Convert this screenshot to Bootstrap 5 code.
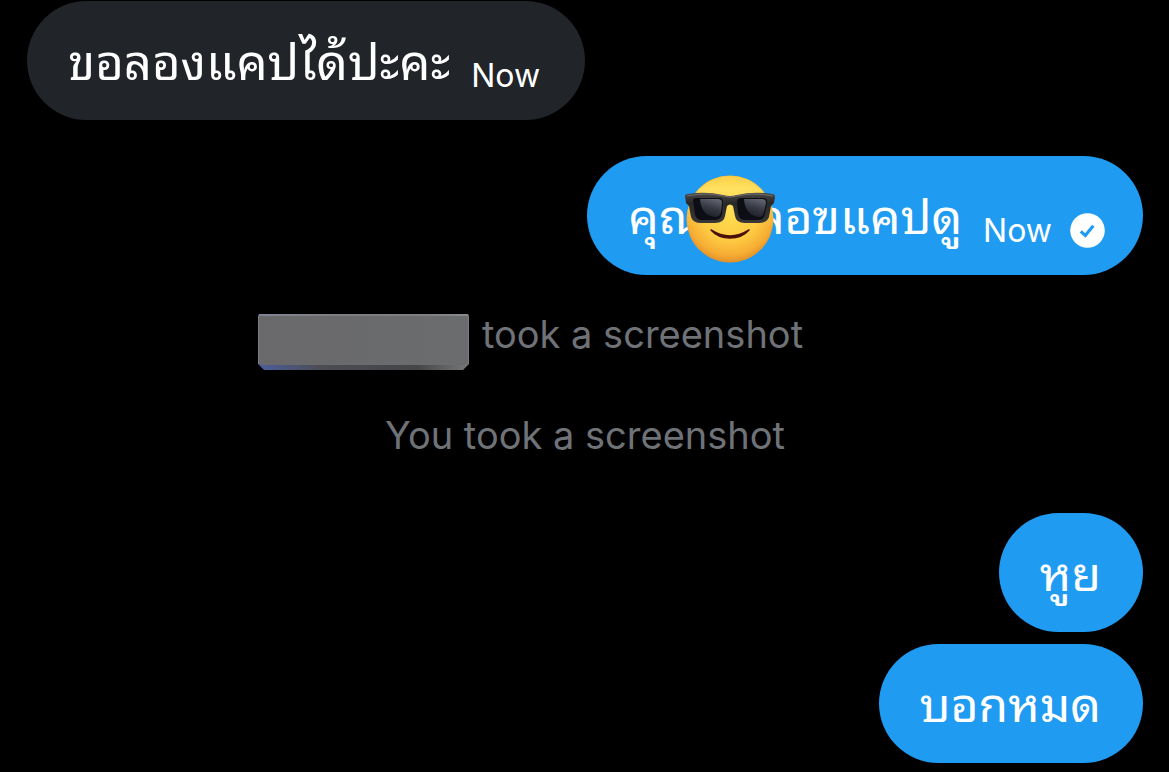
<!DOCTYPE html>
<html lang="th">
<head>
<meta charset="utf-8">
<meta name="viewport" content="width=device-width, initial-scale=1">
<title>Messages</title>
<link href="https://cdn.jsdelivr.net/npm/bootstrap@5.3.0/dist/css/bootstrap.min.css" rel="stylesheet">
<style>
body { background: #000; font-family: "Noto Sans Thai Looped", "Noto Sans", sans-serif; }
.thread { padding: 1px 26px 9px 27px; }
.bubble { min-height: 119px; padding: 0 42px 0 41px; border-radius: 60px; font-size: 48px; line-height: 76px; color: #fff; }
.bubble-in { background: #212428; font-size: 49px; padding-right: 45px; }
.bubble-out { background: #1f9bf2; }
.bubble-sent { padding-right: 38px; }
.bubble-text { padding-bottom: 6px; }
.stamp { font-family: Inter, sans-serif; font-size: 32px; line-height: 40px; margin: 30px 0 0 21px; }
.sent-icon { margin: 30px 0 0 18px; }
.gap-reply { margin-top: 36px; }
.gap-group { margin-top: 12px; }
.sticker { margin: 6px -19px 0 -17px; position: relative; }
.notice { font-family: Inter, sans-serif; font-size: 38px; line-height: 50px; color: #6f7378; }
.notice-first { margin-top: 34px; padding-right: 110px; }
.notice-second { margin-top: 38px; margin-bottom: 53px; }
.name-block { margin: 5px 12px 1px 0; }
</style>
</head>
<body>
<main class="thread container-fluid d-flex flex-column">
  <div class="bubble bubble-in d-flex align-items-center align-self-start">
    <span class="bubble-text">ขอลองแคปได้ปะคะ</span>
    <span class="stamp">Now</span>
  </div>

  <div class="bubble bubble-out bubble-sent gap-reply d-flex align-items-center align-self-end">
    <span class="bubble-text">คุณ</span>
    <svg class="sticker flex-shrink-0" width="92" height="90" viewBox="0 0 92 90" role="img" aria-label="Smiling face with sunglasses">
      <defs>
        <radialGradient id="face" cx=".5" cy=".42" r=".6">
          <stop offset="0" stop-color="#ffdc50"/><stop offset=".55" stop-color="#fdca42"/><stop offset=".82" stop-color="#f6ae34"/><stop offset="1" stop-color="#e08a26"/>
        </radialGradient>
        <linearGradient id="shine" x2="0" y2="1"><stop stop-color="#ffd84e" stop-opacity=".7"/><stop offset=".15" stop-color="#ffe668" stop-opacity=".8"/><stop offset=".6" stop-color="#ffe052" stop-opacity="0"/></linearGradient>
        <linearGradient id="lens" x1=".7" y1="0" x2=".35" y2="1"><stop stop-color="#62646f"/><stop offset=".5" stop-color="#363844"/><stop offset="1" stop-color="#1c1d27"/></linearGradient>
        <linearGradient id="frame" x2="0" y2="1"><stop stop-color="#4b4948"/><stop offset=".35" stop-color="#292828"/><stop offset="1" stop-color="#393737"/></linearGradient>
      </defs>
      <circle cx="46" cy="45" r="43.500" fill="url(#face)"/>
      <circle cx="46" cy="45" r="43" fill="url(#shine)"/>
      <path d="M1 22Q1 20 4 20Q22 17 39 21Q46 23 53 21Q70 17 88 20Q91 20 91 23L90 29L87 32L85 43Q83 49 75 49L61 49Q52 49 51 42L49 32Q46 29 43 32L41 42Q40 49 31 49L17 49Q9 49 7 43L5 32L2 29Z" fill="url(#frame)"/>
      <path d="M9 26Q9 24 13 24L35 24Q39 24 39 28L38 40Q37 46 30 46L18 46Q12 46 11 40Z" fill="#0d0e15"/>
      <path d="M53 28Q53 24 57 24L79 24Q83 24 83 28L81 40Q80 46 74 46L62 46Q55 46 54 40Z" fill="#0d0e15"/>
      <path d="M16 25L34 25Q38 25 38 29L37 38Q36 43 31 43Q17 41 16 25Z" fill="url(#lens)"/>
      <path d="M60 25L78 25Q82 25 82 29L80 38Q79 43 75 43Q61 41 60 25Z" fill="url(#lens)"/>
      <path d="M3 22Q22 18 39 22Q46 24 53 22Q70 18 89 22" fill="none" stroke="#716e6c" stroke-width="1"/>
      <path d="M27 56Q46 68 65 56Q58 64 46 64Q34 64 27 56Z" fill="#4b1008" stroke="#4b1008" stroke-width="1.500" stroke-linejoin="round"/>
    </svg>
    <span class="bubble-text">ลอฃแคปดู</span>
    <span class="stamp">Now</span>
    <svg class="sent-icon flex-shrink-0" width="35" height="35" viewBox="0 0 35 35" role="img" aria-label="Sent">
      <circle cx="17.500" cy="17.500" r="17.300" fill="#fff"/>
      <path d="M10.800 18.400L15.300 22.500L23.300 12.800" fill="none" stroke="#1f9bf2" stroke-width="3.200"/>
    </svg>
  </div>

  <div class="notice notice-first d-flex justify-content-center">
    <svg class="name-block flex-shrink-0" width="213" height="57" viewBox="0 0 213 57" role="img" aria-label="Hidden name">
      <defs>
        <linearGradient id="plate"><stop stop-color="#69696c"/><stop offset="1" stop-color="#6b6c6e"/></linearGradient>
        <linearGradient id="edge"><stop stop-color="#4c5f9c"/><stop offset=".3" stop-color="#4b4c54"/><stop offset=".75" stop-color="#454548"/><stop offset="1" stop-color="#77787a"/></linearGradient>
      </defs>
      <path d="M1 2Q1 0 3 0H210Q212 0 212 2V50L206 56H7L1 50Z" fill="url(#edge)"/>
      <path d="M1 2H212V49L208 51H5L1 49Z" fill="url(#plate)"/>
      <path d="M2 1H211" stroke="#919195" stroke-width="1.500"/>
      <path d="M1.500 2V50M211.500 2V50" stroke="#7c7d84"/>
    </svg>
    <span>took a screenshot</span>
  </div>
  <div class="notice notice-second text-center">You took a screenshot</div>

  <div class="bubble bubble-out d-flex align-items-center align-self-end">
    <span class="bubble-text">หูย</span>
  </div>
  <div class="bubble bubble-out gap-group d-flex align-items-center align-self-end">
    <span class="bubble-text">บอกหมด</span>
  </div>
</main>
<script src="https://cdn.jsdelivr.net/npm/bootstrap@5.3.0/dist/js/bootstrap.bundle.min.js"></script>
</body>
</html>
